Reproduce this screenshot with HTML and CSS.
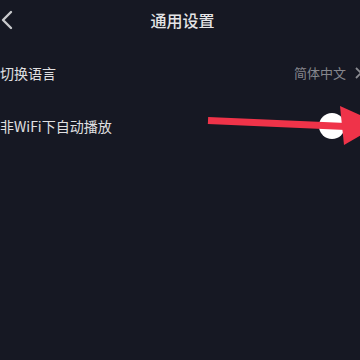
FILE: index.html
```html
<!DOCTYPE html>
<html lang="zh">
<head>
<meta charset="utf-8">
<link rel="stylesheet" href="styles.css">
</head>
<body>
<div class="screen">
  <header class="topbar">
    <svg class="back" width="14" height="20" viewBox="0 0 14 20"><path d="M11 2 L3 10 L11 18" fill="none" stroke="#c9cacd" stroke-width="2.4" stroke-linecap="round" stroke-linejoin="round"/></svg>
    <div class="title">通用设置</div>
  </header>
  <div class="list">
    <div class="row">
      <span class="label">切换语言</span>
      <span class="value">简体中文
        <svg class="chev" width="10" height="14" viewBox="0 0 10 14"><path d="M2 2 L7 7 L2 12" fill="none" stroke="#8a8b91" stroke-width="1.8"/></svg>
      </span>
    </div>
    <div class="row">
      <span class="label">非WiFi下自动播放</span>
      <span class="switch"><span class="knob"></span></span>
    </div>
  </div>
  <svg class="annot" width="360" height="360" viewBox="0 0 360 360">
    <line x1="208" y1="120.5" x2="346" y2="126.5" stroke="#ef3349" stroke-width="7"/>
    <polygon points="340,106 344,145 380,124" fill="#ef3349"/>
  </svg>
</div>
</body>
</html>
```
FILE: styles.css
```css
html, body {
  margin: 0;
  padding: 0;
  background: #161823;
}
.screen {
  position: relative;
  width: 360px;
  height: 360px;
  overflow: hidden;
  background: #161823;
  font-family: "Noto Sans CJK SC", "Noto Sans", sans-serif;
}
.topbar {
  position: relative;
  height: 40px;
  display: flex;
  align-items: center;
  justify-content: center;
}
.back {
  position: absolute;
  left: 0;
  top: 10px;
}
.title {
  color: #e4e4e6;
  font-size: 16px;
  font-weight: 500;
  margin-left: 5px;
}
.list {
  padding-top: 6px;
  display: flex;
  flex-direction: column;
}
.row {
  height: 53px;
  display: flex;
  align-items: center;
  justify-content: space-between;
  padding-left: 0;
}
.label {
  color: #e0e0e2;
  font-size: 14px;
  margin-left: 0;
}
.value {
  display: flex;
  align-items: center;
  gap: 8px;
  color: #86878d;
  font-size: 13px;
  margin-right: -4px;
}
.chev {
  display: block;
}
.switch {
  display: flex;
  align-items: center;
  margin-right: 15px;
}
.knob {
  width: 26px;
  height: 26px;
  border-radius: 50%;
  background: #ffffff;
}
.annot {
  position: absolute;
  left: 0;
  top: 0;
  pointer-events: none;
}
```
